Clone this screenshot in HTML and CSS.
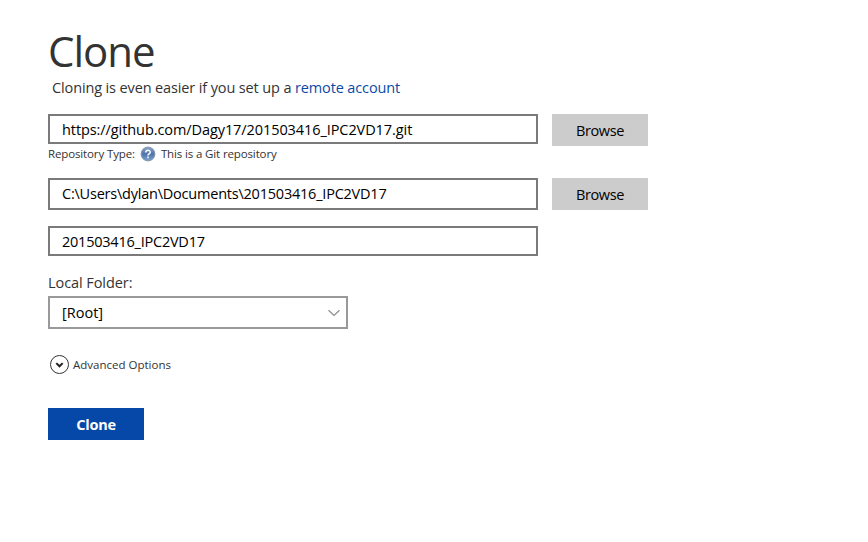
FILE: index.html
```html
<!DOCTYPE html>
<html lang="en">
<head>
<meta charset="utf-8">
<title>Clone</title>
<link rel="stylesheet" href="styles.css">
</head>
<body>
<main class="page">
  <h1 class="title">Clone</h1>
  <p class="intro">Cloning is even easier if you set up a <a class="link" href="#">remote account</a></p>
  <div class="row">
    <div class="field url">https://github.com/Dagy17/201503416_IPC2VD17.git</div>
    <button class="browse">Browse</button>
  </div>
  <div class="type">
    <span class="type-label">Repository Type:</span>
    <svg class="help" viewBox="0 0 16 16">
      <defs><linearGradient id="ball" x1="0" y1="0" x2="0" y2="1"><stop offset="0" stop-color="#8ba6cc"/><stop offset=".5" stop-color="#4d74ab"/><stop offset="1" stop-color="#7fa3d3"/></linearGradient></defs>
      <circle cx="8" cy="8" r="6.9" fill="url(#ball)" stroke="#8793a6"/>
      <path d="M5.8 6.6c0-3 4.4-3 4.4-.4 0 1.6-2.2 1.6-2.2 3.2M8 10.6v1.6" fill="none" stroke="#fff" stroke-width="1.5"/>
    </svg>
    <span class="type-value">This is a Git repository</span>
  </div>
  <div class="row path-row">
    <div class="field path">C:\Users\dylan\Documents\201503416_IPC2VD17</div>
    <button class="browse">Browse</button>
  </div>
  <div class="field name">201503416_IPC2VD17</div>
  <div class="folder-label">Local Folder:</div>
  <div class="select"><span class="root">[Root]</span>
    <svg class="chevron" viewBox="0 0 14 8"><path d="M1.5 1.2 7 6.4l5.5-5.2" fill="none" stroke="#8c8c8c" stroke-width="1.2"/></svg>
  </div>
  <div class="advanced">
    <svg class="expand" viewBox="0 0 20 20"><circle cx="9.5" cy="9.5" r="9" fill="#fff" stroke="#333"/><path d="M6.3 8.1 9.5 11.3l3.2-3.2" fill="none" stroke="#222" stroke-width="2"/></svg>
    <span class="advanced-text">Advanced Options</span>
  </div>
  <button class="clone">Clone</button>
</main>
</body>
</html>
```
FILE: styles.css
```css
* { box-sizing: border-box; }
body { margin: 0; background: #fff; color: #333; font-family: "Open Sans", "Noto Sans", sans-serif; font-size: 14.5px; }
.page { padding: 25px 48px 0; white-space: nowrap; }
.title { margin: 0 0 1px; height: 52px; line-height: 52px; font-size: 42px; font-weight: 400; letter-spacing: -1px; }
.intro { margin: 0 0 0 4px; height: 20px; line-height: 20px; letter-spacing: -.13px; }
.link { color: #0a4aa6; text-decoration: none; }
.row { display: flex; gap: 14px; height: 32px; margin-top: 16px; align-items: flex-start; }
.field { width: 490px; height: 30px; border: 2px solid #7a7a7a; padding: 0 12px; line-height: 27px; color: #000; }
.url { letter-spacing: -.08px; }
.path { letter-spacing: -.22px; }
.path-row .field { height: 32px; line-height: 27px; }
.browse { width: 96px; height: 32px; padding: 0; border: 0; background: #ccc; font: inherit; color: #000; letter-spacing: -.4px; }
.type { display: flex; align-items: center; height: 16px; font-size: 11.5px; letter-spacing: -.13px; }
.type-label, .type-value { line-height: 16px; }
.help { width: 16px; height: 16px; margin: 0 5px; }
.name { margin-top: 16px; letter-spacing: -.23px; }
.folder-label { height: 20px; line-height: 20px; margin: 17px 0 3px; letter-spacing: -.07px; }
.select { display: flex; align-items: center; justify-content: space-between; width: 300px; height: 33px; padding: 0 5px 0 12px; border: 2px solid #999; color: #000; }
.chevron { width: 14px; height: 8px; }
.advanced { display: flex; align-items: center; gap: 3px; height: 20px; margin: 26px 0 0 2px; font-size: 11.5px; }
.advanced-text { line-height: 16px; }
.expand { width: 20px; height: 20px; }
.clone { display: block; width: 96px; height: 32px; margin-top: 33px; padding: 0; border: 0; background: #0648a8; color: #fff; font: inherit; font-weight: 700; letter-spacing: -.25px; }
```
